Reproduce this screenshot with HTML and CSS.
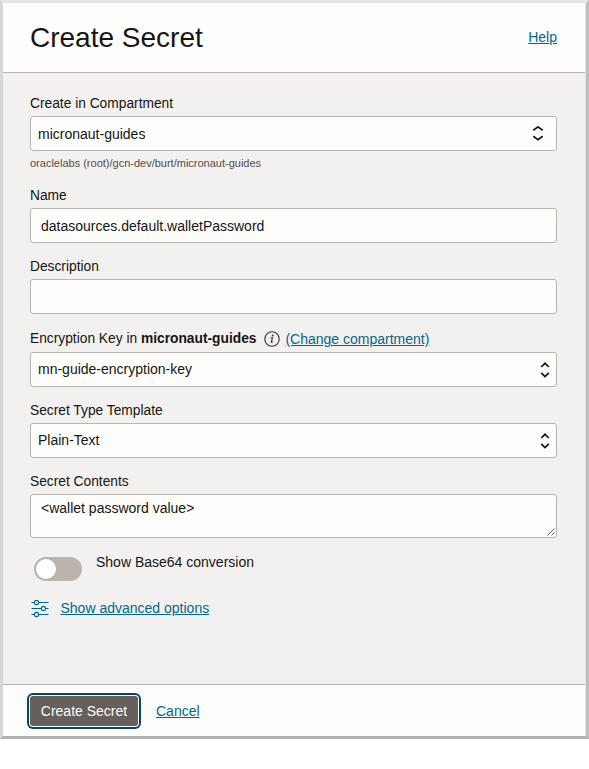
FILE: index.html
```html
<!DOCTYPE html>
<html lang="en">
<head>
<meta charset="utf-8">
<title>Create Secret</title>
<link rel="stylesheet" href="styles.css">
</head>
<body>
<main class="panel">
  <header class="header">
    <h1 class="title">Create Secret</h1>
    <a class="link help" href="#">Help</a>
  </header>
  <form class="content">
    <section class="field compartment">
      <div class="label">Create in Compartment</div>
      <div class="box select inset"><span>micronaut-guides</span>
        <svg class="chevrons" width="12" height="16" viewBox="0 0 12 16"><path d="M1.300 4.200 6 .9 10.700 4.200M1.300 10.300 6 13.600 10.700 10.300"/></svg>
      </div>
      <div class="hint">oraclelabs (root)/gcn-dev/burt/micronaut-guides</div>
    </section>
    <section class="field">
      <div class="label">Name</div>
      <div class="box input">datasources.default.walletPassword</div>
    </section>
    <section class="field description">
      <div class="label">Description</div>
      <div class="box input"></div>
    </section>
    <section class="field key">
      <div class="label"><span>Encryption Key in <b>micronaut-guides</b></span>
        <svg class="info" width="16" height="16" viewBox="0 0 16 16"><circle cx="8" cy="8" r="7.200"/><path d="M6.500 6.700h2L7.300 11.100h1.500"/><circle class="dot" cx="8.700" cy="4.500" r=".9"/></svg>
        <a class="link change" href="#">(Change compartment)</a>
      </div>
      <div class="box select raised"><span>mn-guide-encryption-key</span>
        <svg class="chevrons" width="10" height="16" viewBox="0 0 10 16"><path d="M1.200 5 5 1.300 8.800 5M1.200 10.800 5 14.500 8.800 10.800"/></svg>
      </div>
    </section>
    <section class="field">
      <div class="label">Secret Type Template</div>
      <div class="box select raised"><span>Plain-Text</span>
        <svg class="chevrons" width="10" height="16" viewBox="0 0 10 16"><path d="M1.200 5 5 1.300 8.800 5M1.200 10.800 5 14.500 8.800 10.800"/></svg>
      </div>
    </section>
    <section class="field">
      <div class="label">Secret Contents</div>
      <div class="box textarea"><span>&lt;wallet password value&gt;</span>
        <svg class="grip" width="8" height="8" viewBox="0 0 8 8"><path d="M.5 7.500l7-7M4.500 7.500l3-3"/></svg>
      </div>
    </section>
    <div class="toggle-row">
      <span class="toggle"><span class="knob"></span></span>
      <span class="toggle-text">Show Base64 conversion</span>
    </div>
    <div class="advanced">
      <svg class="sliders" width="18" height="18" viewBox="0 0 18 18"><path d="M.5 2.500H3M8 2.500h9.500M.5 8.500H10M15 8.500h2.500M.5 14.500H3M8 14.500h9.500"/><circle cx="5.500" cy="2.500" r="2.100"/><circle cx="12.500" cy="8.500" r="2.100"/><circle cx="5.500" cy="14.500" r="2.100"/></svg>
      <a class="link" href="#">Show advanced options</a>
    </div>
  </form>
  <footer class="footer">
    <button class="primary" type="button">Create Secret</button>
    <a class="link" href="#">Cancel</a>
  </footer>
</main>
</body>
</html>
```
FILE: styles.css
```css
* { box-sizing: border-box; }
body {
  margin: 0;
  background: #fff;
  color: #161513;
  font: 14px/20px "Liberation Sans", Arial, sans-serif;
}
.panel {
  display: flex;
  flex-direction: column;
  height: 739px;
  border: 3px solid;
  border-color: #e5e5e5 #bebebe #b1b1b1 #d7d7d7;
  background: #fdfefc;
  box-shadow: inset -1px 0 #e5e5e5;
}
.header {
  display: flex;
  align-items: center;
  justify-content: space-between;
  height: 70px;
  margin-right: 1px;
  padding: 0 28px 0 27px;
  border-bottom: 1px solid #bab4ad;
}
.title { margin: 0; font-size: 28px; font-weight: 400; line-height: 36px; }
.link { color: #00688c; text-decoration: underline; }
.help { margin-bottom: 2px; }
.content {
  flex: 1;
  margin-right: 1px;
  padding: 20px 28px 0 27px;
  background: #f3f1f0;
}
.field { margin-bottom: 13px; }
.compartment { margin-bottom: 14px; }
.description { margin-bottom: 14px; }
.label {
  display: flex;
  align-items: center;
  height: 20px;
  margin-bottom: 3px;
  padding-top: 2px;
  font-size: 13.78px;
}
.key .label { margin-bottom: 4px; }
.box {
  height: 35px;
  border: 1px solid #bab4ad;
  border-radius: 3px;
  background: #fdfefc;
}
.select {
  display: flex;
  align-items: center;
  justify-content: space-between;
  padding: 0 6px 0 7px;
}
.inset { padding-right: 12px; }
.raised span { margin-bottom: 2px; }
.chevrons { fill: none; stroke: #161513; stroke-width: 1.7; }
.input { padding: 7px 10px; }
.hint { margin-top: 4px; color: #524b48; font-size: 11px; line-height: 16px; }
.info { margin: 0 5px 0 8px; fill: none; stroke: #33302e; stroke-width: 1.1; }
.info .dot { fill: #33302e; stroke: none; }
.change { font-size: 14px; }
.textarea {
  display: flex;
  justify-content: space-between;
  height: 44px;
  padding: 3px 1px 1px 10px;
}
.grip { align-self: flex-end; fill: none; stroke: #55504d; stroke-width: .9; }
.toggle-row { display: flex; margin: 14px 0 0 4px; }
.toggle {
  width: 48px;
  height: 24px;
  margin-top: 5px;
  padding: 2px;
  border-radius: 12px;
  background: #bab4ad;
}
.knob { display: block; width: 20px; height: 20px; border-radius: 50%; background: #fff; }
.toggle-text { margin-left: 14px; }
.advanced { display: flex; align-items: center; gap: 11.5px; margin: 17px 0 0 1px; }
.sliders { margin-top: 1px; fill: none; stroke: #00688c; stroke-width: 1.1; }
.footer {
  display: flex;
  align-items: center;
  gap: 18px;
  height: 52px;
  margin-right: 1px;
  padding: 1px 27px 0;
  border-top: 1px solid #bab4ad;
}
.primary {
  width: 108px;
  height: 30px;
  padding: 0;
  border: 0;
  border-radius: 3px;
  background: #665f5b;
  color: #fdfefc;
  font: inherit;
  box-shadow: 0 0 0 1px #fff, 0 0 0 3px #00485f;
}
```
